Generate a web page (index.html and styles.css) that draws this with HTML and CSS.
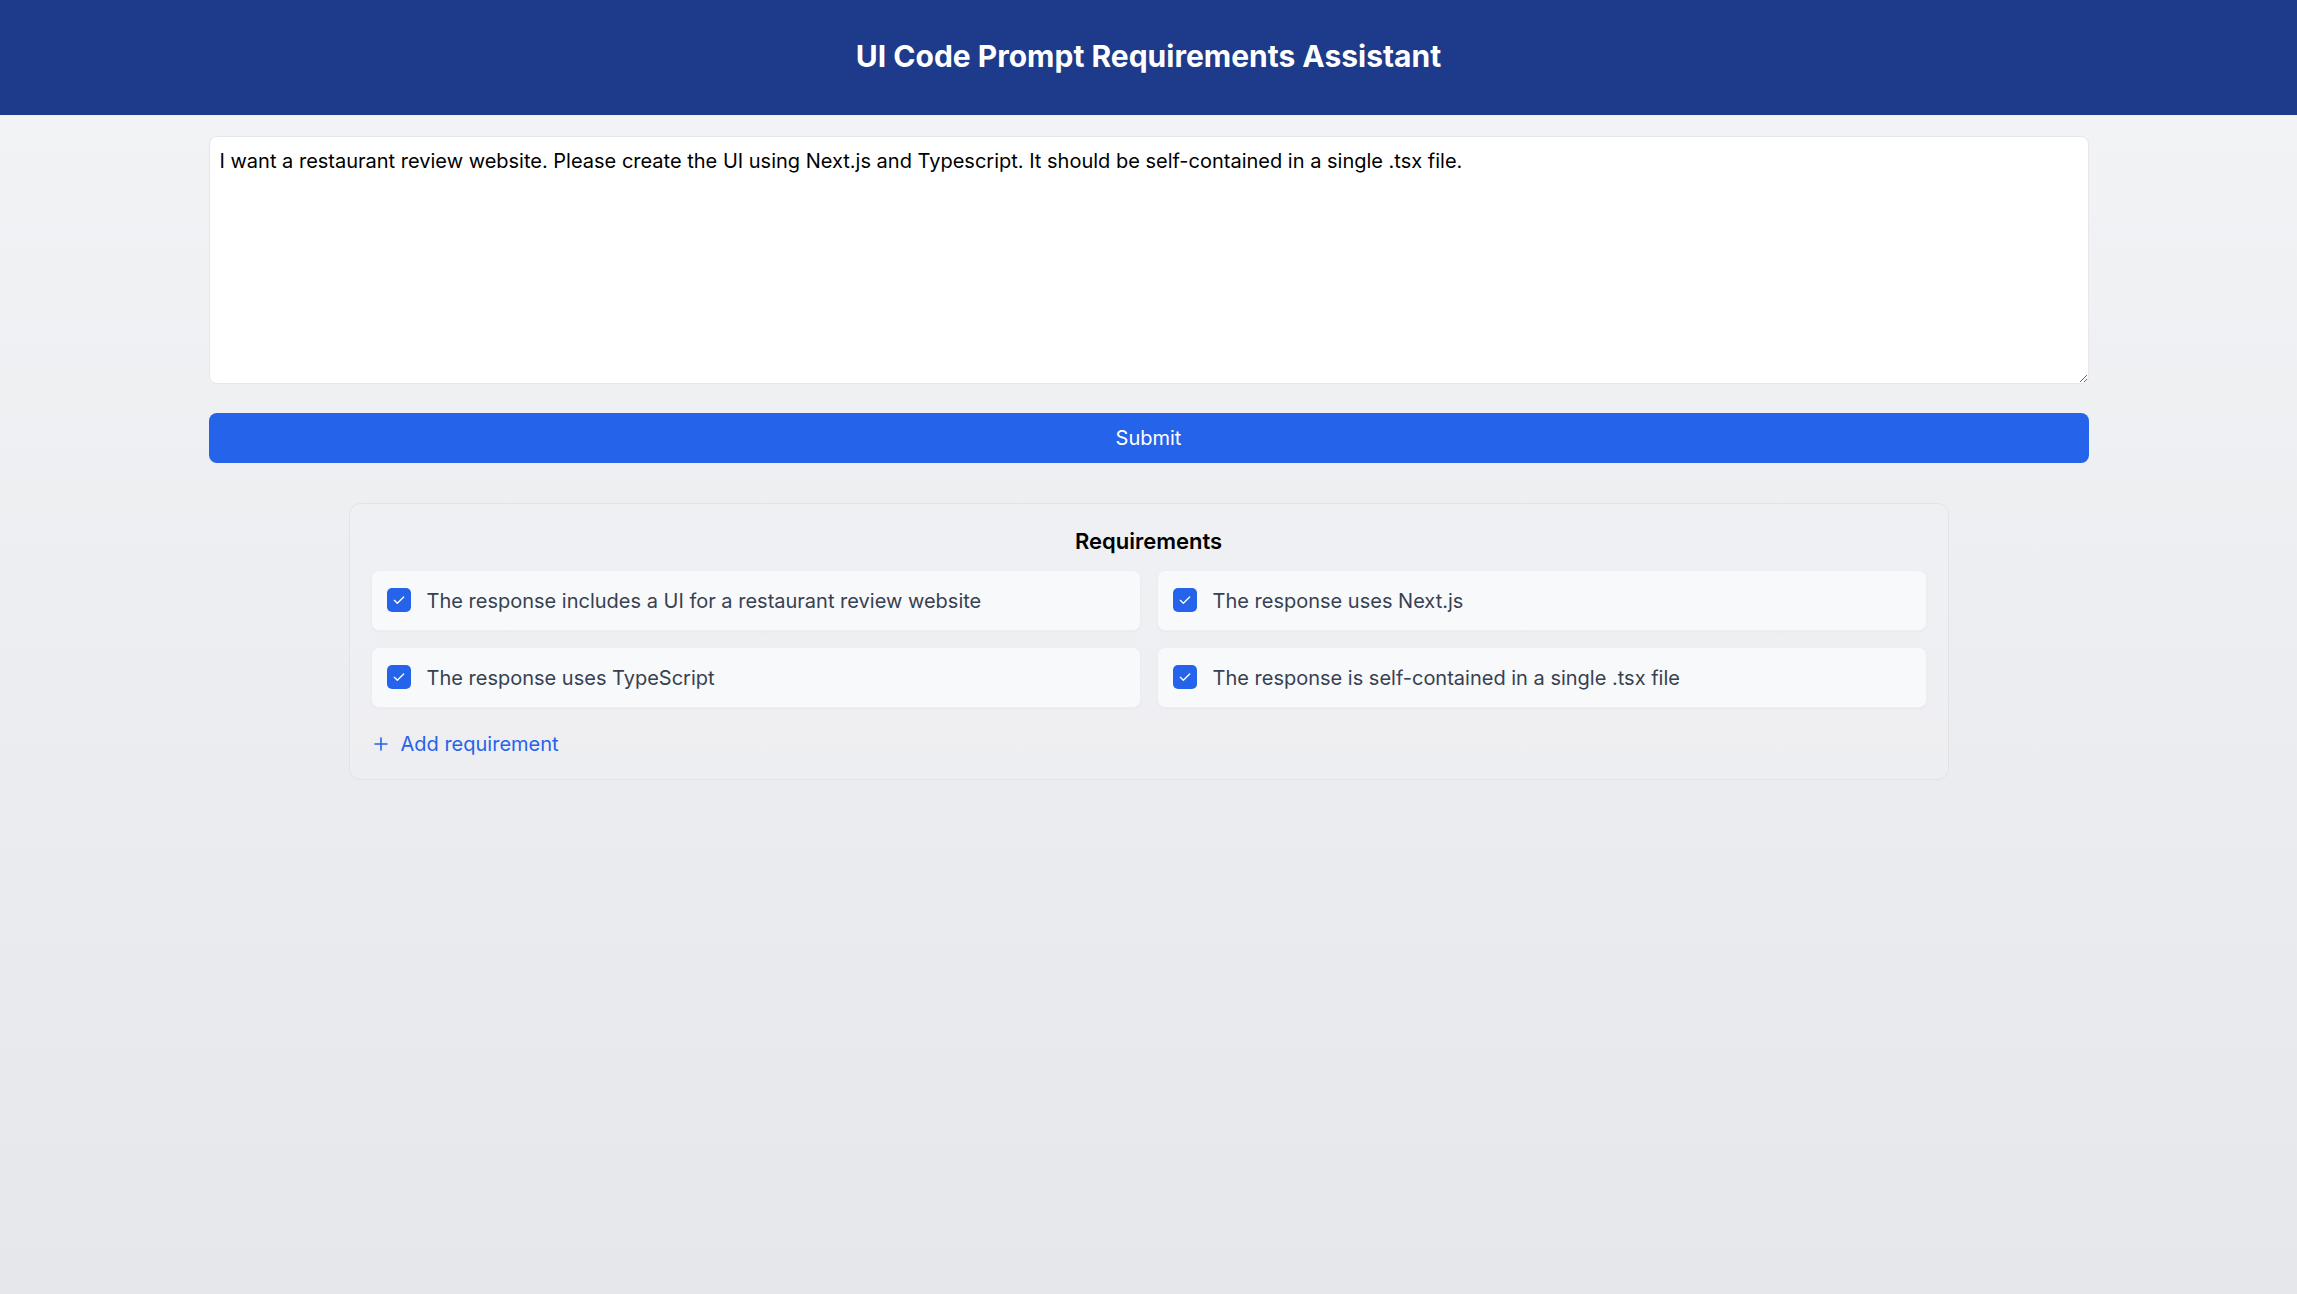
FILE: index.html
```html
<!DOCTYPE html>
<html lang="en">
<head>
<meta charset="utf-8">
<title>UI Code Prompt Requirements Assistant</title>
<link rel="stylesheet" href="styles.css">
</head>
<body>
<div class="page">
  <header class="topbar">
    <h1 class="title">UI Code Prompt Requirements Assistant</h1>
  </header>
  <main class="main">
    <textarea class="prompt">I want a restaurant review website. Please create the UI using Next.js and Typescript. It should be self-contained in a single .tsx file.</textarea>
    <button class="submit" type="button">Submit</button>
    <section class="card">
      <h2 class="card-title">Requirements</h2>
      <div class="grid">
        <label class="item">
          <span class="check"><svg viewBox="0 0 24 24" width="16" height="16"><path d="M5 12.5l4.5 4.5L19 7.5" fill="none" stroke="#fff" stroke-width="2" stroke-linecap="round" stroke-linejoin="round"/></svg></span>
          <span class="item-text">The response includes a UI for a restaurant review website</span>
        </label>
        <label class="item">
          <span class="check"><svg viewBox="0 0 24 24" width="16" height="16"><path d="M5 12.5l4.5 4.5L19 7.5" fill="none" stroke="#fff" stroke-width="2" stroke-linecap="round" stroke-linejoin="round"/></svg></span>
          <span class="item-text">The response uses Next.js</span>
        </label>
        <label class="item">
          <span class="check"><svg viewBox="0 0 24 24" width="16" height="16"><path d="M5 12.5l4.5 4.5L19 7.5" fill="none" stroke="#fff" stroke-width="2" stroke-linecap="round" stroke-linejoin="round"/></svg></span>
          <span class="item-text">The response uses TypeScript</span>
        </label>
        <label class="item">
          <span class="check"><svg viewBox="0 0 24 24" width="16" height="16"><path d="M5 12.5l4.5 4.5L19 7.5" fill="none" stroke="#fff" stroke-width="2" stroke-linecap="round" stroke-linejoin="round"/></svg></span>
          <span class="item-text">The response is self-contained in a single .tsx file</span>
        </label>
      </div>
      <button class="add" type="button">
        <svg class="plus" viewBox="0 0 16 16" width="16" height="16"><path d="M8 2v12M2 8h12" fill="none" stroke="currentColor" stroke-width="1.6" stroke-linecap="round"/></svg>
        <span>Add requirement</span>
      </button>
    </section>
  </main>
</div>
</body>
</html>
```
FILE: styles.css
```css
* { box-sizing: border-box; }
html, body { margin: 0; padding: 0; }
body {
  font-family: Inter, "Noto Sans", "Liberation Sans", sans-serif;
  color: #111827;
}
.page {
  min-height: 100vh;
  background: linear-gradient(to bottom, #f3f4f6, #e5e7eb);
}
.topbar {
  height: 115px;
  background: #1e3a8a;
  display: flex;
  align-items: center;
  justify-content: center;
  padding-bottom: 4px;
}
.title {
  margin: 0;
  color: #ffffff;
  font-size: 30px;
  font-weight: 700;
  letter-spacing: 0;
}
.main {
  width: 1880px;
  margin: 0 auto;
  padding-top: 21px;
  display: flex;
  flex-direction: column;
  align-items: center;
}
.prompt {
  display: block;
  width: 100%;
  height: 248px;
  border: 1px solid #e5e7eb;
  border-radius: 8px;
  background: #ffffff;
  padding: 9px 10px;
  font-family: inherit;
  font-size: 20px;
  line-height: 1.5;
  color: #000000;
  resize: vertical;
  outline: none;
}
.submit {
  margin-top: 29px;
  width: 100%;
  height: 50px;
  border: none;
  border-radius: 8px;
  background: #2563eb;
  color: #ffffff;
  font-family: inherit;
  font-size: 20px;
  font-weight: 400;
  cursor: pointer;
}
.card {
  margin-top: 40px;
  width: 1600px;
  border: 1px solid rgba(209, 213, 219, 0.45);
  border-radius: 12px;
  background: rgba(243, 244, 246, 0.35);
  padding: 22px 21px 20px;
}
.card-title {
  margin: 0 0 14px;
  text-align: center;
  font-size: 22px;
  line-height: 30px;
  font-weight: 600;
  color: #000000;
}
.grid {
  display: grid;
  grid-template-columns: 1fr 1fr;
  gap: 16px;
}
.item {
  display: flex;
  align-items: center;
  gap: 16px;
  padding: 15px 15px 14px;
  background: #f8f9fb;
  border: 1px solid #eceef1;
  border-radius: 8px;
  box-shadow: 0 1px 2px rgba(0,0,0,0.03);
}
.check {
  flex: none;
  width: 24px;
  height: 24px;
  margin-top: -3px;
  border-radius: 5px;
  background: #2563eb;
  display: flex;
  align-items: center;
  justify-content: center;
}
.item-text {
  font-size: 20px;
  line-height: 30px;
  color: #374151;
}
.add {
  margin-top: 21px;
  display: flex;
  align-items: center;
  gap: 12px;
  padding: 0 0 0 2px;
  border: none;
  background: none;
  color: #2563eb;
  font-family: inherit;
  font-size: 20px;
  line-height: 30px;
  cursor: pointer;
}
.plus { flex: none; }
```
